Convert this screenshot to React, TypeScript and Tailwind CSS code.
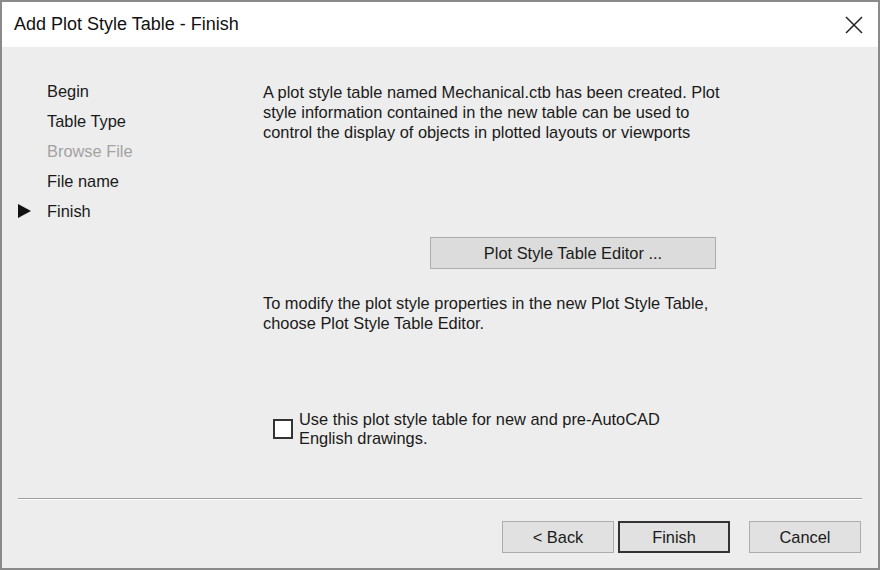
const navItems = [
  { label: 'Begin', disabled: false, current: false },
  { label: 'Table Type', disabled: false, current: false },
  { label: 'Browse File', disabled: true, current: false },
  { label: 'File name', disabled: false, current: false },
  { label: 'Finish', disabled: false, current: true },
];

function App() {
  return (
    <div
      className="flex h-[570px] w-[880px] flex-col border-2 border-[#8a8a8a] bg-[#ededed] text-[16.4px] text-[#1a1a1a]"
      style={{ fontFamily: '"Liberation Sans", Arial, sans-serif' }}
    >
      <div className="flex h-[45px] items-center justify-between bg-white pl-[12px] pr-[15px]">
        <span className="text-[18px] text-[#111]">Add Plot Style Table - Finish</span>
        <svg width="18" height="18" viewBox="0 0 18 18" className="text-[#222]">
          <path d="M1 1 L17 17 M17 1 L1 17" stroke="currentColor" strokeWidth="1.5" />
        </svg>
      </div>

      <div className="flex flex-1">
        <div className="w-[261px] pt-[29px]">
          {navItems.map((item) => (
            <div key={item.label} className="flex h-[30px] items-center">
              <div className="flex w-[45px] justify-start pl-[16px]">
                {item.current && (
                  <svg width="13" height="14" viewBox="0 0 13 14">
                    <path d="M0 0 L13 7 L0 14 Z" fill="#111" />
                  </svg>
                )}
              </div>
              <span className={item.disabled ? 'text-[#a3a3a3]' : ''}>{item.label}</span>
            </div>
          ))}
        </div>

        <div className="flex flex-1 flex-col pt-[35px]">
          <p className="w-[464px] leading-[20px]">
            A plot style table named Mechanical.ctb has been created. Plot style information
            contained in the new table can be used to control the display of objects in plotted
            layouts or viewports
          </p>

          <button
            type="button"
            className="ml-[167px] mt-[95px] h-[32px] w-[286px] border border-[#adadad] bg-[#dcdcdc]"
          >
            Plot Style Table Editor ...
          </button>

          <p className="mt-[24px] w-[464px] leading-[20px]">
            To modify the plot style properties in the new Plot Style Table, choose Plot Style
            Table Editor.
          </p>

          <div className="ml-[10px] mt-[77px] flex items-center gap-[6px]">
            <div className="h-[20px] w-[20px] border-2 border-[#333] bg-white" />
            <span className="w-[380px] leading-[19px]">
              Use this plot style table for new and pre-AutoCAD English drawings.
            </span>
          </div>
        </div>
      </div>

      <div className="mx-[16px] h-[2px] border-t border-[#a0a0a0] bg-white" />

      <div className="flex justify-end gap-[4px] pb-[15px] pr-[17px] pt-[21px]">
        <button type="button" className="h-[32px] w-[112px] border border-[#adadad] bg-[#e1e1e1]">
          &lt; Back
        </button>
        <button type="button" className="h-[32px] w-[112px] border-2 border-[#333] bg-[#e1e1e1]">
          Finish
        </button>
        <button
          type="button"
          className="ml-[15px] h-[32px] w-[112px] border border-[#adadad] bg-[#e1e1e1]"
        >
          Cancel
        </button>
      </div>
    </div>
  );
}

export default App;
